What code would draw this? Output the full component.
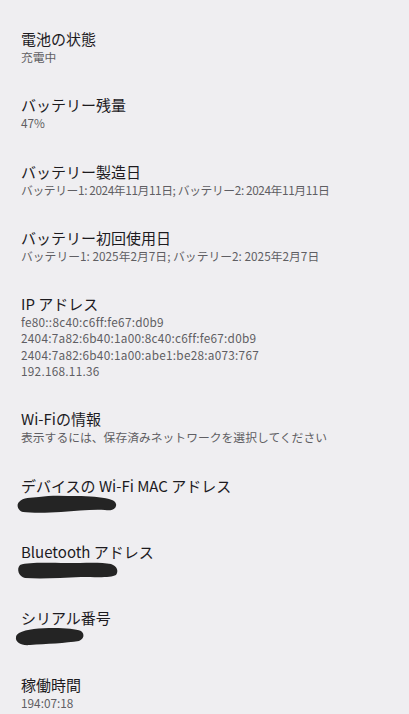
const items = [
  { title: '電池の状態', lines: ['充電中'] },
  { title: 'バッテリー残量', lines: ['47%'] },
  {
    title: 'バッテリー製造日',
    lines: ['バッテリー1: 2024年11月11日; バッテリー2: 2024年11月11日'],
    tight: true,
  },
  { title: 'バッテリー初回使用日', lines: ['バッテリー1: 2025年2月7日; バッテリー2: 2025年2月7日'] },
  {
    title: 'IP アドレス',
    lines: [
      'fe80::8c40:c6ff:fe67:d0b9',
      '2404:7a82:6b40:1a00:8c40:c6ff:fe67:d0b9',
      '2404:7a82:6b40:1a00:abe1:be28:a073:767',
      '192.168.11.36',
    ],
    wide: true,
  },
  { title: 'Wi-Fiの情報', lines: ['表示するには、保存済みネットワークを選択してください'] },
  { title: 'デバイスの Wi-Fi MAC アドレス', blob: 'mac' },
  { title: 'Bluetooth アドレス', blob: 'bt' },
  { title: 'シリアル番号', blob: 'serial' },
  { title: '稼働時間', lines: ['194:07:18'] },
]

// redaction scribbles over the hidden values
const blobs = {
  mac: {
    w: 100,
    ml: '-ml-[4px]',
    d: 'M2 6 C6 1 14 2 22 1 C34 -1 48 0 60 0 C72 0 84 1 92 3 C97 4 100 7 99 10 C98 14 93 15 88 14 C76 13 60 15 44 16 C30 17 14 17 6 16 C1 15 -1 9 2 6 Z',
  },
  bt: {
    w: 102,
    ml: '-ml-[4px]',
    d: 'M3 3 C12 0 30 1 50 1 C68 1 84 0 94 2 C100 4 102 9 99 13 C94 16 80 15 64 15 C44 16 24 17 8 16 C2 15 -1 7 3 3 Z',
  },
  serial: {
    w: 70,
    ml: '-ml-[5px]',
    d: 'M3 5 C10 1 24 0 38 0 C50 0 60 1 65 3 C69 6 68 11 63 13 C50 15 30 16 14 17 C5 18 -1 14 0 9 C0 8 1 6 3 5 Z',
  },
}

function Blob({ kind }) {
  const b = blobs[kind]
  return (
    <svg width={b.w} height="16.3" viewBox={`0 0 ${b.w} 16.3`} className={`${b.ml} block overflow-visible`}>
      <path d={b.d} fill="#242424" />
    </svg>
  )
}

export default function App() {
  return (
    <div
      className="min-h-screen w-full bg-[#efeef1] pt-[14px] text-[#1d1b1f]"
      style={{ fontFamily: '"Noto Sans CJK JP", "Noto Sans", sans-serif' }}
    >
      {items.map((item) => (
        <div key={item.title} className="px-[21px] py-[15px]">
          <div className="text-[15px] leading-[20px] text-[#1d1b1f]">{item.title}</div>
          {item.lines &&
            item.lines.map((l) => (
              <div
                key={l}
                className={`text-[11.8px] leading-[16.3px] text-[#5f5e63] ${
                  item.tight ? 'tracking-[-0.4px]' : item.wide ? 'tracking-[0.25px]' : ''
                }`}
              >
                {l}
              </div>
            ))}
          {item.blob && <Blob kind={item.blob} />}
        </div>
      ))}
    </div>
  )
}
